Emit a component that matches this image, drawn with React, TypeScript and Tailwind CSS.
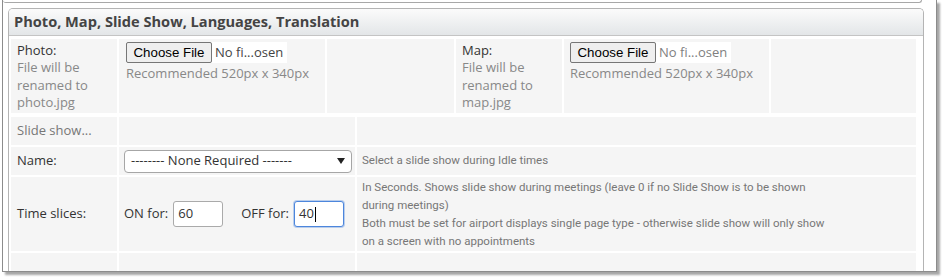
const cell = "bg-[#f5f5f5] shrink-0";
const hint = "font-['Roboto',sans-serif] text-[11.5px] text-[#777]";

const FilePick = ({ dim }: { dim?: boolean }) => (
  <div>
    <div className="flex items-center">
      <div className="flex h-[21px] w-[86px] items-center justify-center rounded-[2px] border border-[#767676] bg-[#efefef] font-['Liberation_Sans',Arial,sans-serif] text-[13.3px] text-black">
        Choose File
      </div>
      <div className={`flex h-[21px] items-center bg-white pl-[3px] pr-[4px] ${dim ? "text-[#808080]" : "text-[#444]"}`}>
        No fi...osen
      </div>
    </div>
    <div className="mt-[1px] leading-[18px] text-[#888]">Recommended 520px x 340px</div>
  </div>
);

const App = () => {
  return (
    <div className="h-[280px] w-[946px] overflow-hidden bg-white font-['Open_Sans',sans-serif] text-[13px]">
      <div className="ml-[2px] h-[272px] w-[935px] overflow-hidden border-x border-b border-[#8c8c8c] bg-white shadow-[3px_3px_2px_rgba(0,0,0,0.35)]">
        {/* bottom edge of the section above */}
        <div className="h-[3px] w-[919px] rounded-b-[4px] border-r border-b border-[#a8a8a8]" />

        <div className="ml-[5px] mt-[5px] w-[916px] rounded-t-[5px] border border-b-0 border-[#b4b4b4]">
          <div className="flex h-[27px] items-center rounded-t-[4px] border-b border-[#c4c4c4] bg-gradient-to-b from-[#fbfbfb] to-[#e3e6e8] pl-[5px] text-[14.6px] font-bold text-[#444]">
            Photo, Map, Slide Show, Languages, Translation
          </div>

          <div className="pl-[2px] pt-[3px]">
            {/* photo / map */}
            <div className="flex h-[74px] gap-[2px]">
              <div className={`${cell} w-[106px] pl-[6px] pt-[3px] leading-[17.4px]`}>
                <div className="text-[#333]">Photo:</div>
                <div className="text-[#888]">
                  File will be
                  <br />
                  renamed to
                  <br />
                  photo.jpg
                </div>
              </div>
              <div className={`${cell} w-[206px] pl-[7px] pt-[3px]`}>
                <FilePick />
              </div>
              <div className={`${cell} w-[127px]`} />
              <div className={`${cell} w-[106px] pl-[6px] pt-[3px] leading-[17.4px]`}>
                <div className="text-[#333]">Map:</div>
                <div className="text-[#888]">
                  File will be
                  <br />
                  renamed to
                  <br />
                  map.jpg
                </div>
              </div>
              <div className={`${cell} w-[205px] pl-[6px] pt-[3px]`}>
                <FilePick dim />
              </div>
              <div className={`${cell} w-[145px]`} />
            </div>

            {/* slide show */}
            <div className="mt-[4px] flex h-[28px] gap-[2px]">
              <div className={`${cell} flex w-[106px] items-center pl-[6px] text-[#777]`}>Slide show...</div>
              <div className={`${cell} w-[236px]`} />
              <div className={`${cell} w-[559px]`} />
            </div>

            <div className="mt-[2px] flex h-[28px] gap-[2px]">
              <div className={`${cell} flex w-[106px] items-center pl-[6px] text-[#333]`}>Name:</div>
              <div className={`${cell} flex w-[236px] items-center pl-[5px]`}>
                <div className="flex h-[23px] w-[228px] items-center justify-between rounded-[4px] border border-[#a6a6a6] bg-white pl-[6px] pr-[6px] text-[#333]">
                  <span>-------- None Required -------</span>
                  <svg width="8" height="6" viewBox="0 0 8 6">
                    <path d="M0 0h8L4 6z" fill="#222" />
                  </svg>
                </div>
              </div>
              <div className={`${cell} flex w-[559px] items-center pl-[5px] ${hint}`}>
                Select a slide show during Idle times
              </div>
            </div>

            <div className="mt-[2px] flex h-[74px] gap-[2px]">
              <div className={`${cell} flex w-[106px] items-center pl-[6px] text-[#333]`}>Time slices:</div>
              <div className={`${cell} flex w-[236px] items-center pl-[5px] text-[#333]`}>
                <span>ON for:</span>
                <div className="ml-[5px] flex h-[26px] w-[50px] items-center rounded-[3px] border border-[#aaa] bg-white pl-[4px]">
                  60
                </div>
                <span className="ml-[18px]">OFF for:</span>
                <div className="ml-[5px] flex h-[26px] w-[50px] items-center rounded-[3px] border border-[#4d86dc] bg-white pl-[4px] shadow-[0_0_0_1px_rgba(77,134,220,0.35)]">
                  40
                  <span className="ml-[1px] h-[15px] w-px bg-black" />
                </div>
              </div>
              <div className={`${cell} flex w-[559px] items-center pl-[5px] leading-[18px] ${hint}`}>
                <div>
                  In Seconds. Shows slide show during meetings (leave 0 if no Slide Show is to be shown
                  <br />
                  during meetings)
                  <br />
                  Both must be set for airport displays single page type - otherwise slide show will only show
                  <br />
                  on a screen with no appointments
                </div>
              </div>
            </div>

            <div className="mt-[2px] flex h-[30px] gap-[2px]">
              <div className={`${cell} w-[106px]`} />
              <div className={`${cell} w-[236px]`} />
              <div className={`${cell} w-[559px]`} />
            </div>
          </div>
        </div>
      </div>
    </div>
  );
};

export default App;
